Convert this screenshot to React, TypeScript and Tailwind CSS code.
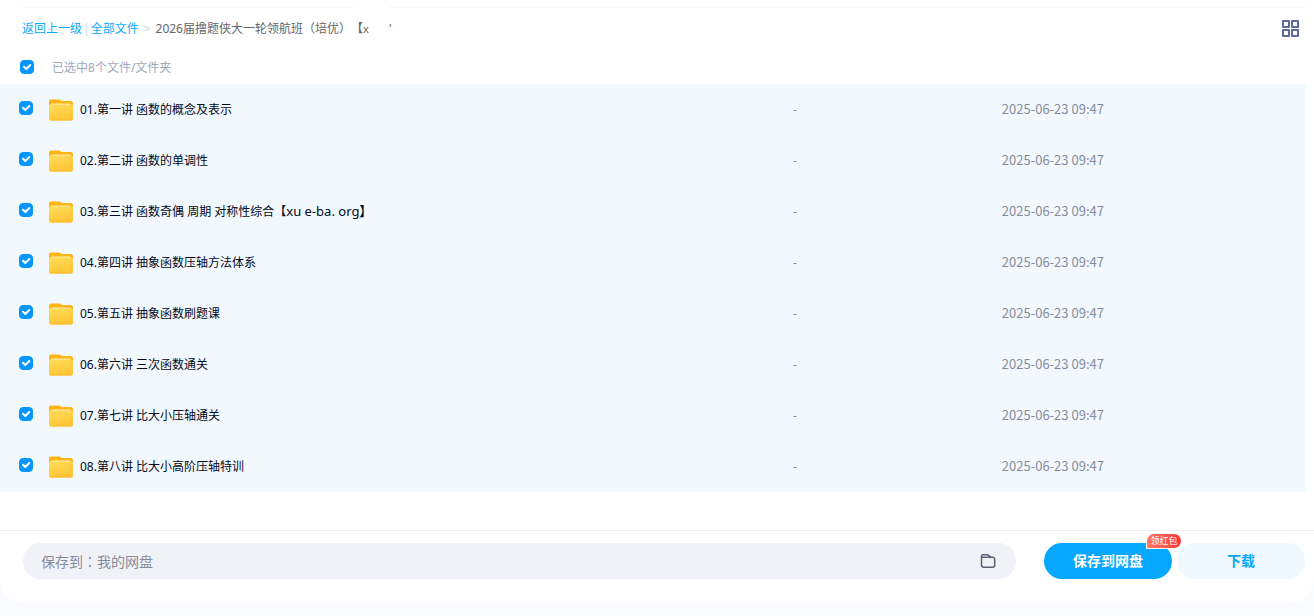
import { useState } from "react";

type FileItem = {
  id: number;
  name: string;
  suffix?: string;
  size: string;
  date: string;
};

const files: FileItem[] = [
  { id: 1, name: "01.第一讲 函数的概念及表示", size: "-", date: "2025-06-23 09:47" },
  { id: 2, name: "02.第二讲 函数的单调性", size: "-", date: "2025-06-23 09:47" },
  { id: 3, name: "03.第三讲 函数奇偶 周期 对称性综合【", suffix: "xu e-ba. org】", size: "-", date: "2025-06-23 09:47" },
  { id: 4, name: "04.第四讲 抽象函数压轴方法体系", size: "-", date: "2025-06-23 09:47" },
  { id: 5, name: "05.第五讲 抽象函数刷题课", size: "-", date: "2025-06-23 09:47" },
  { id: 6, name: "06.第六讲 三次函数通关", size: "-", date: "2025-06-23 09:47" },
  { id: 7, name: "07.第七讲 比大小压轴通关", size: "-", date: "2025-06-23 09:47" },
  { id: 8, name: "08.第八讲 比大小高阶压轴特训", size: "-", date: "2025-06-23 09:47" },
];

type CheckboxProps = {
  id: string;
  checked: boolean;
  onChange: () => void;
};

const Checkbox = ({ id, checked, onChange }: CheckboxProps) => (
  <span className="grid size-[14px] shrink-0">
    <input
      id={id}
      type="checkbox"
      checked={checked}
      onChange={onChange}
      className="col-start-1 row-start-1 size-[14px] cursor-pointer appearance-none rounded border border-[#c4cbd9] bg-white checked:border-[#0596ff] checked:bg-[#0596ff]"
    />
    {checked && (
      <svg viewBox="0 0 14 14" className="pointer-events-none col-start-1 row-start-1 size-[14px]" fill="none">
        <path d="M4 6.8 6.3 9 10.3 5" stroke="#fff" strokeWidth="2" strokeLinecap="round" strokeLinejoin="round" />
      </svg>
    )}
  </span>
);

const FolderIcon = () => (
  <svg viewBox="0 0 24 22" className="h-[22px] w-6 shrink-0" aria-hidden="true">
    <defs>
      <linearGradient id="folderFront" x1="0" y1="0" x2="0.4" y2="1">
        <stop offset="0" stopColor="#ffdc5a" />
        <stop offset="1" stopColor="#ffc636" />
      </linearGradient>
    </defs>
    <path d="M0 2.6C0 1.2 .8.5 2 .5h8.2c.8 0 1.3.3 1.7.8l.5.8h9.2c1.600 0 2.400.9 2.400 2.400V12H0z" fill="#ffb412" />
    <path d="M2 6c0-1 .6-1.600 1.600-1.600h16.800c1 0 1.600.6 1.600 1.600v2H2z" fill="#ffeeb8" />
    <path d="M0 6.800c0-.9.6-1.400 1.600-1.400h20.800c1 0 1.600.5 1.600 1.400v12.400c0 1.500-.9 2.300-2.300 2.300H2.300C.9 21.500 0 20.700 0 19.200z" fill="url(#folderFront)" />
    <path d="M.2 19.800c.3 1 1 1.700 2.100 1.700h19.400c1.100 0 1.800-.7 2.100-1.700-.5.600-1.200.800-2.100.800H2.300c-.9 0-1.600-.2-2.100-.8z" fill="#ffb82a" />
  </svg>
);

const GridIcon = () => (
  <svg viewBox="0 0 17 17" className="size-[17px]" fill="none" stroke="#5b6b9b" strokeWidth="2" strokeLinejoin="round">
    <rect x="1" y="1" width="6" height="6" />
    <rect x="10" y="1" width="6" height="6" />
    <rect x="1" y="10" width="6" height="6" />
    <rect x="10" y="10" width="6" height="6" />
  </svg>
);

const SaveFolderIcon = () => (
  <svg viewBox="0 0 16 16" className="size-4" fill="none" stroke="#5a6072" strokeWidth="1.500" strokeLinejoin="round">
    <path d="M1.500 4.200V12c0 1.400.8 2.200 2.200 2.200h8.800c1.400 0 2.200-.8 2.200-2.200V6.400c0-1.400-.8-2.200-2.200-2.200z" />
    <path d="M1.500 4.400V3.200c0-.9.500-1.400 1.400-1.400h4.300c.5 0 .9.200 1.300.5l2.400 1.900" />
  </svg>
);

// Full-width punctuation sits in the middle of its box in this face
const Punct = ({ children }: { children: string }) => (
  <span className="font-['Noto_Sans_CJK_TC',sans-serif] [text-spacing-trim:space-all]">{children}</span>
);

const App = () => {
  const [selected, setSelected] = useState<number[]>(files.map((f) => f.id));
  const allSelected = selected.length === files.length;

  const toggle = (id: number) =>
    setSelected((prev) => (prev.includes(id) ? prev.filter((x) => x !== id) : [...prev, id]));

  return (
    <div className="min-h-screen bg-[#fafbff] font-['Noto_Sans','Noto_Sans_CJK_SC',sans-serif] text-xs">
      <main className="rounded-b-3xl bg-white pt-[7px] pb-6">
        {/* Top divider */}
        <div className="mr-[9px] ml-[23px] flex gap-[37px]">
          <div className="h-px w-[330px] bg-[#f2f3f5]" />
          <div className="h-px flex-1 bg-[#f2f3f5]" />
        </div>

        {/* Breadcrumb */}
        <header className="flex h-[41px] items-center justify-between pr-[15px] pl-[22px]">
          <nav className="flex items-center whitespace-nowrap text-[#666]">
            <a href="#back" className="text-[#09aaff]">返回上一级</a>
            <span className="px-px text-[#c4d8f3]">|</span>
            <a href="#all" className="text-[#09aaff]">全部文件</a>
            <span className="px-[5px] text-[#c4d8f3]">&gt;</span>
            <span>
              2026届撸题侠大一轮领航班<Punct>（</Punct>培优<Punct>）【</Punct>
              <span className="text-[11px]">x</span>
            </span>
            <span className="ml-5">'</span>
          </nav>
          <button type="button" aria-label="切换视图" className="cursor-pointer">
            <GridIcon />
          </button>
        </header>

        {/* Select all */}
        <div className="flex h-[35px] items-center gap-[18px] pt-px pl-5">
          <Checkbox
            id="select-all"
            checked={allSelected}
            onChange={() => setSelected(allSelected ? [] : files.map((f) => f.id))}
          />
          <label htmlFor="select-all" className="pt-px text-[#a0a8b9]">
            已选中{selected.length}个文件/文件夹
          </label>
        </div>

        {/* File list */}
        <div className="pr-[9px]">
          <table className="w-full table-fixed">
            <colgroup>
              <col className="w-[60%]" />
              <col className="w-[16%]" />
              <col />
            </colgroup>
            <tbody>
              {files.map((file) => (
                <tr
                  key={file.id}
                  className={`h-[51px] ${selected.includes(file.id) ? "bg-[#f1f9ff]" : "bg-white"}`}
                >
                  <td className="pl-[19px]">
                    <div className="flex items-center">
                      <div className="pb-1">
                        <Checkbox
                          id={`file-${file.id}`}
                          checked={selected.includes(file.id)}
                          onChange={() => toggle(file.id)}
                        />
                      </div>
                      <label htmlFor={`file-${file.id}`} className="flex items-center gap-[7px] pl-4 whitespace-nowrap text-[#03081a]">
                        <FolderIcon />
                        <span>
                          {file.name}
                          {file.suffix && <span className="text-[13px]">{file.suffix}</span>}
                        </span>
                      </label>
                    </div>
                  </td>
                  <td className="pl-2.5 text-[#878c9c]">{file.size}</td>
                  <td className="pb-0.5 pl-2.5 font-['Noto_Sans_CJK_SC',sans-serif] text-[13px] text-[#878c9c]">{file.date}</td>
                </tr>
              ))}
            </tbody>
          </table>
        </div>

        {/* Save bar */}
        <footer className="mt-[38px] flex items-center border-t border-[#ededf0] pt-3 pr-[9px] pl-[23px] text-sm">
          <button
            type="button"
            className="flex h-9 flex-1 cursor-pointer items-center justify-between rounded-full bg-[#f1f2f8] pr-5 pl-[18px] text-[#878c9c]"
          >
            <span>
              保存到<Punct>：</Punct>我的网盘
            </span>
            <SaveFolderIcon />
          </button>
          <div className="ml-7 flex gap-[5px]">
            <button
              type="button"
              className="relative h-9 w-32 cursor-pointer rounded-full bg-[#06a7ff] font-bold text-white"
            >
              保存到网盘
              <span className="absolute -top-2.5 -right-2.5 flex h-4 w-9 items-center justify-center rounded-t-lg rounded-br-lg border border-white bg-linear-to-r from-[#ff7663] to-[#ff2f3c] text-[9px] font-normal">
                领红包
              </span>
            </button>
            <button type="button" className="h-9 w-32 cursor-pointer rounded-full bg-[#f0f9ff] font-bold text-[#06a7ff]">
              下载
            </button>
          </div>
        </footer>
      </main>
    </div>
  );
};

export default App;
